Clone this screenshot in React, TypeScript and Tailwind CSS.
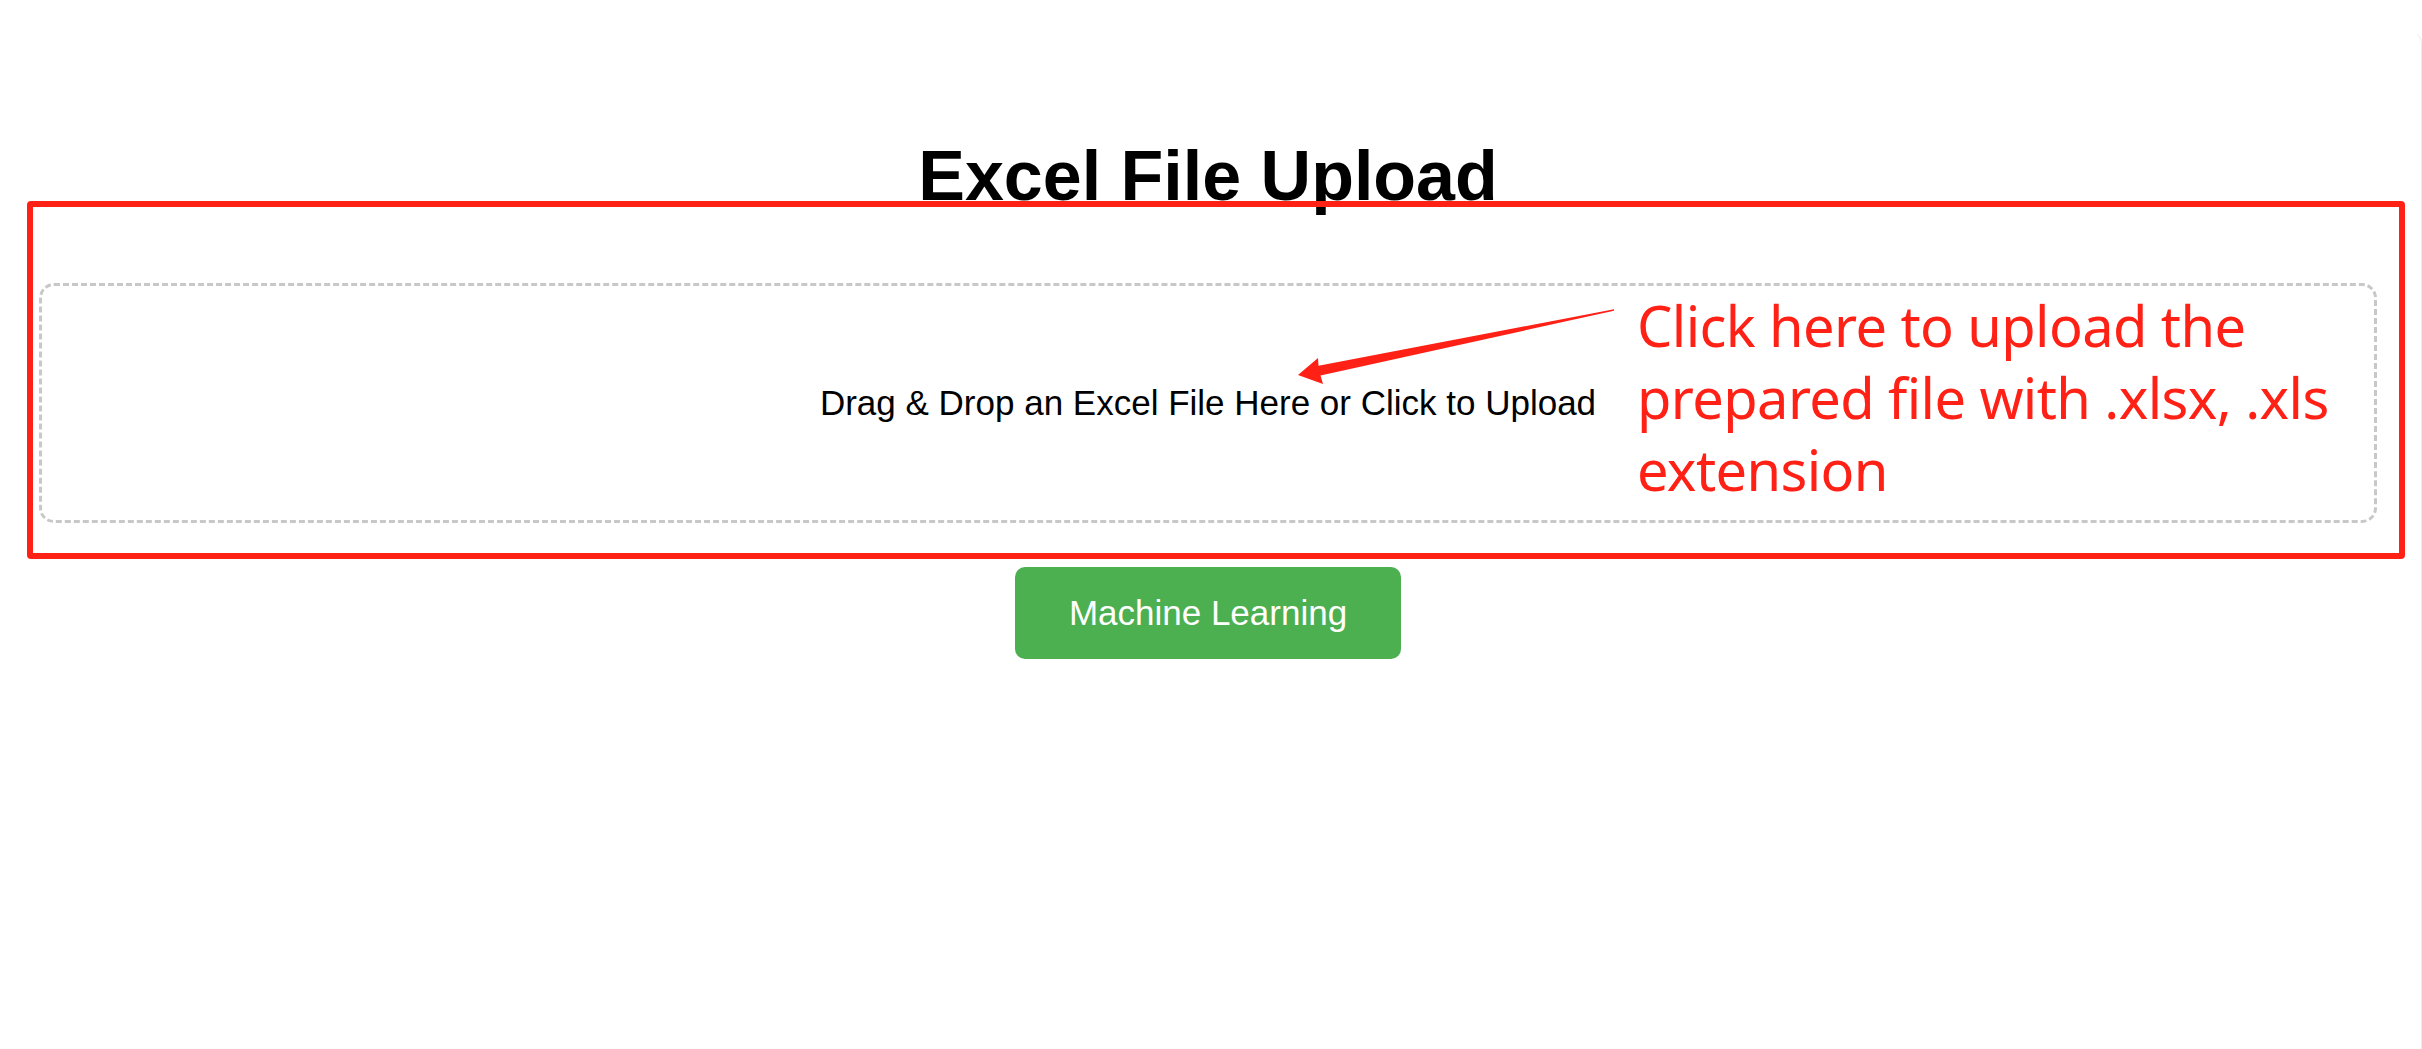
import React from 'react'

// annotation overlay drawn on top of the upload page (red frame, arrow, note)
function Annotation() {
  return (
    <>
      <div className="absolute left-[27px] top-[201px] w-[2378px] h-[358px] border-[6px] border-[#ff2016] rounded-[4px] pointer-events-none" />
      <svg
        className="absolute left-0 top-0 pointer-events-none"
        width={2422}
        height={1049}
        viewBox="0 0 2422 1049"
      >
        <polygon
          points="1614,309.3 1318.5,365.7 1318,358 1298,375 1323,384 1320.5,375.5 1614,310.7"
          fill="#ff2016"
        />
      </svg>
      <div
        className="absolute left-[1637px] top-[289px] text-[56px] leading-[72px] tracking-[-0.6px] text-[#ff2016] whitespace-nowrap"
        style={{ fontFamily: '"Noto Sans", "Open Sans", sans-serif' }}
      >
        Click here to upload the
        <br />
        prepared file with .xlsx, .xls
        <br />
        extension
      </div>
    </>
  )
}

export default function App() {
  return (
    <div
      className="relative w-[2422px] h-[1049px] bg-white overflow-hidden"
      style={{ fontFamily: '"Liberation Sans", Arial, sans-serif' }}
    >
      <div className="w-[2416px] flex flex-col items-center">
        <h1 className="mt-[136px] text-[70px] leading-[80px] font-bold text-black">
          Excel File Upload
        </h1>

        <div className="mt-[67px] w-[2338px] h-[240px] border-[3px] border-dashed border-[#c8c8c8] rounded-[15px] flex items-center justify-center cursor-pointer">
          <p className="text-[35px] text-black">
            Drag &amp; Drop an Excel File Here or Click to Upload
          </p>
        </div>

        <button className="mt-[44px] w-[386px] h-[92px] rounded-[10px] bg-[#4caf50] text-white text-[35px]">
          Machine Learning
        </button>
      </div>

      <div className="absolute right-0 top-[30px] bottom-0 w-[20px] border-r border-t border-[#ececec] rounded-tr-[14px] border-t-transparent" />

      <Annotation />
    </div>
  )
}
